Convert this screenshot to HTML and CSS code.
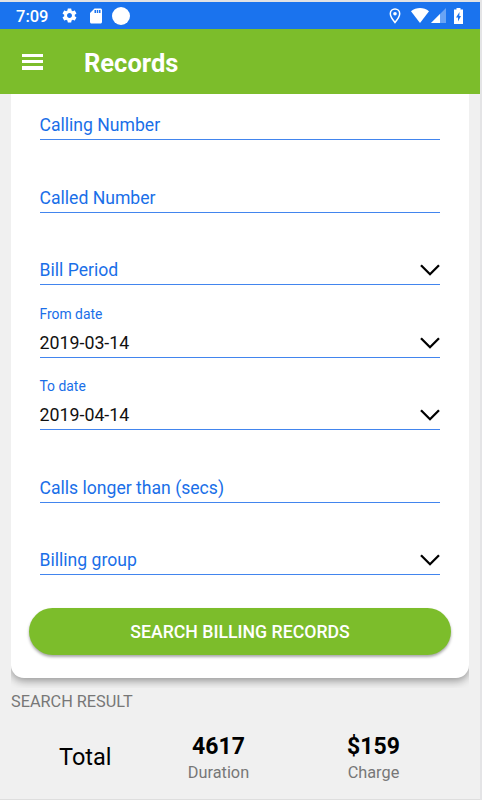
FILE: index.html
```html
<!DOCTYPE html>
<html lang="en">
<head>
<meta charset="utf-8">
<title>Records</title>
<link rel="stylesheet" href="styles.css">
</head>
<body>
<div class="screen">
  <div class="status">
    <span class="time">7:09</span>
    <svg class="gear" width="17" height="17" viewBox="0 0 24 24"><path fill="#fff" d="M19.43 12.98c.04-.32.07-.64.07-.98s-.03-.66-.07-.98l2.11-1.65c.19-.15.24-.42.12-.64l-2-3.46c-.12-.22-.39-.3-.61-.22l-2.49 1c-.52-.4-1.08-.73-1.69-.98l-.38-2.65C14.46 2.18 14.25 2 14 2h-4c-.25 0-.46.18-.49.42l-.38 2.65c-.61.25-1.17.59-1.69.98l-2.49-1c-.23-.09-.49 0-.61.22l-2 3.46c-.13.22-.07.49.12.64l2.11 1.65c-.04.32-.07.65-.07.98s.03.66.07.98l-2.11 1.65c-.19.15-.24.42-.12.64l2 3.46c.12.22.39.3.61.22l2.49-1c.52.4 1.08.73 1.69.98l.38 2.65c.03.24.24.42.49.42h4c.25 0 .46-.18.49-.42l.38-2.65c.61-.25 1.17-.59 1.69-.98l2.49 1c.23.09.49 0 .61-.22l2-3.46c.12-.22.07-.49-.12-.64l-2.11-1.65zM12 15.500c-1.930 0-3.500-1.570-3.500-3.500s1.570-3.500 3.500-3.500 3.500 1.570 3.500 3.500-1.570 3.500-3.500 3.500z"/></svg>
    <svg class="sd" width="18" height="18" viewBox="0 0 24 24"><path fill="#fff" d="M18 2h-8L4.020 8 4 20c0 1.100.9 2 2 2h12c1.100 0 2-.9 2-2V4c0-1.100-.9-2-2-2zm-6 6h-2V4h2v4zm3 0h-2V4h2v4zm3 0h-2V4h2v4z"/></svg>
    <span class="dot"></span>
    <span class="spacer"></span>
    <svg class="pin" width="12" height="16" viewBox="0 0 12 16"><path fill="none" stroke="#fff" stroke-width="1.500" d="M6 14.500C3.500 11.400 1.300 8.500 1.300 5.700a4.700 4.700 0 0 1 9.400 0C10.700 8.500 8.500 11.400 6 14.500z"/><circle cx="6" cy="5.700" r="1.800" fill="#fff"/></svg>
    <svg class="wifi" width="18" height="15" viewBox="0 0 18 15"><path fill="#fff" d="M0 3.200C5.200-1.050 12.800-1.050 18 3.200L9 15z"/></svg>
    <svg class="signal" width="15" height="15" viewBox="0 0 15 15"><path fill="#fff" opacity=".35" d="M15 0v15H0z"/><path fill="#fff" d="M9 6v9H0z"/></svg>
    <svg class="battery" width="9" height="16" viewBox="0 0 9 16"><path fill="#fff" d="M2.500 0h4v1.500H9V16H0V1.500h2.500z"/><path fill="#1a73ee" d="M5.500 4 2 9.500h2V13.500L7 8H5.300z"/></svg>
  </div>
  <div class="appbar">
    <div class="menu"><i></i><i></i><i></i></div>
    <h1>Records</h1>
  </div>
  <div class="content">
    <div class="card">
      <div class="field"><span class="hint">Calling Number</span></div>
      <div class="field"><span class="hint">Called Number</span></div>
      <div class="field"><span class="hint">Bill Period</span><svg class="chev" width="20" height="12" viewBox="0 0 20 12"><path d="M1 1.200 10 10.200 19 1.200"/></svg></div>
      <div class="field"><span class="label">From date</span><span class="value">2019-03-14</span><svg class="chev" width="20" height="12" viewBox="0 0 20 12"><path d="M1 1.200 10 10.200 19 1.200"/></svg></div>
      <div class="field"><span class="label">To date</span><span class="value">2019-04-14</span><svg class="chev" width="20" height="12" viewBox="0 0 20 12"><path d="M1 1.200 10 10.200 19 1.200"/></svg></div>
      <div class="field"><span class="hint">Calls longer than (secs)</span></div>
      <div class="field"><span class="hint">Billing group</span><svg class="chev" width="20" height="12" viewBox="0 0 20 12"><path d="M1 1.200 10 10.200 19 1.200"/></svg></div>
      <button class="search">SEARCH BILLING RECORDS</button>
    </div>
  </div>
  <div class="results">
    <div class="caption">SEARCH RESULT</div>
    <div class="totals">
      <div class="total">Total</div>
      <div class="stat"><b>4617</b><span>Duration</span></div>
      <div class="stat"><b>$159</b><span>Charge</span></div>
    </div>
  </div>
</div>
</body>
</html>
```
FILE: styles.css
```css
* { box-sizing: border-box; }
body { margin: 0; background: #e4e4e6; font-family: Roboto, "Liberation Sans", sans-serif; }
.screen { width: 480px; height: 800px; padding-top: 2px; background: #f0f0f0; border-bottom: 1px solid #dedede; box-shadow: inset 0 2px #e2e2e4; display: flex; flex-direction: column; overflow: hidden; }
.status { height: 27px; flex: none; background: #1a73ee; display: flex; align-items: center; padding: 0 17.500px 0 16px; }
.time { color: #fff; font-size: 16.500px; font-weight: 500; width: 45px; padding-top: 1px; }
.gear { margin-right: 8.500px; }
.sd { margin-right: 7.500px; }
.dot { width: 18px; height: 18px; border-radius: 50%; background: #fff; }
.spacer { flex: 1; }
.pin { margin-right: 9.500px; }
.wifi { margin-right: 2px; }
.signal { margin-right: 8px; }
.appbar { height: 65px; flex: none; background: #7cbd2b; display: flex; align-items: center; padding-left: 22px; }
.menu { width: 21px; height: 16px; display: flex; flex-direction: column; justify-content: space-between; margin-right: 41px; }
.menu i { height: 3.600px; background: #fff; }
h1 { margin: 0; color: #fff; font-size: 25.500px; font-weight: 700; line-height: 30px; padding-top: 2px; }
.content { height: 594px; flex: none; margin: 0 11px; overflow: hidden; }
.card { height: 584px; background: #fff; border-radius: 0 0 13px 13px; padding: 0 18px; box-shadow: 0 3px 8px rgba(0,0,0,.38); }
.field { height: 72.500px; margin: 0 11px 0 10.500px; border-bottom: 1.200px solid #4285ee; position: relative; display: flex; flex-direction: column; justify-content: flex-end; color: #1a6fe8; }
.field:first-child { height: 46px; }
.hint, .value { font-size: 17.600px; line-height: 22px; padding-bottom: 3px; }
.value { color: #111; font-size: 17.800px; }
.label { font-size: 13.900px; line-height: 17px; margin-bottom: 9px; }
.chev { position: absolute; right: 0; bottom: 8px; }
.chev path { fill: none; stroke: #000; stroke-width: 2.300; }
.search { display: block; width: 422px; height: 47px; margin: 32.500px 0 0; border: 0; border-radius: 24px; background: #7cbd2b; color: #fff; font: 500 17.700px Roboto, sans-serif; padding-top: 2px; box-shadow: 0 2px 3px rgba(0,0,0,.35); }
.results { padding: 0 11px; }
.caption { color: #777; font-size: 16.300px; line-height: 20px; margin-top: 4px; }
.totals { display: grid; grid-template-columns: 130px 155px 155px; margin-top: 21px; }
.total { font-size: 23.500px; line-height: 28px; padding: 10px 0 0 48px; color: #000; }
.stat { display: flex; flex-direction: column; align-items: center; }
.stat b { font-size: 23px; line-height: 27px; color: #000; }
.stat span { font-size: 16.300px; line-height: 20px; color: #777; margin-top: 3px; }
```
